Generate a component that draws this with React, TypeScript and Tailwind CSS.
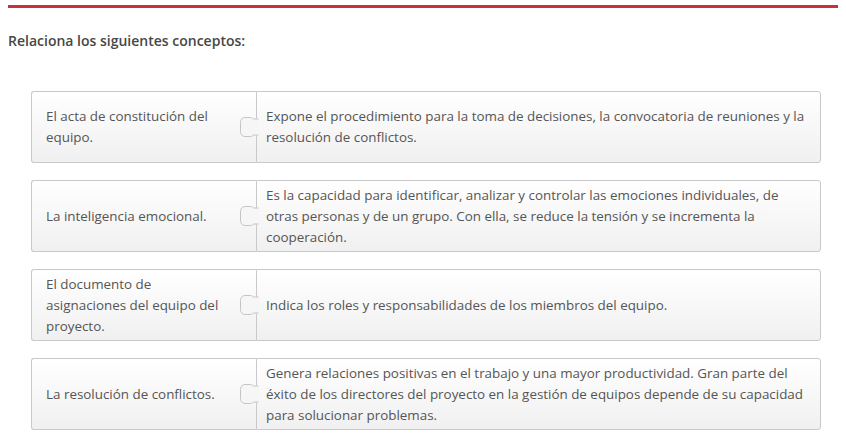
import React from "react";

const rows: { left: string; right: string }[] = [
  {
    left: "El acta de constitución del equipo.",
    right:
      "Expone el procedimiento para la toma de decisiones, la convocatoria de reuniones y la resolución de conflictos.",
  },
  {
    left: "La inteligencia emocional.",
    right:
      "Es la capacidad para identificar, analizar y controlar las emociones individuales, de otras personas y de un grupo. Con ella, se reduce la tensión y se incrementa la cooperación.",
  },
  {
    left: "El documento de asignaciones del equipo del proyecto.",
    right: "Indica los roles y responsabilidades de los miembros del equipo.",
  },
  {
    left: "La resolución de conflictos.",
    right:
      "Genera relaciones positivas en el trabajo y una mayor productividad. Gran parte del éxito de los directores del proyecto en la gestión de equipos depende de su capacidad para solucionar problemas.",
  },
];

function Knob() {
  return (
    <svg
      className="absolute left-[-17px] top-1/2 -translate-y-1/2"
      width="19"
      height="20"
      viewBox="0 0 19 20"
    >
      <rect x="15" y="1.5" width="4" height="17" fill="#f6f6f6" />
      <path
        d="M18.5 2 H14 C12.5 2 12.5 0.5 10.5 0.5 H5 C2.2 0.5 0.5 2.8 0.5 5.5 V14.5 C0.5 17.2 2.2 19.5 5 19.5 H10.5 C12.5 19.5 12.5 18 14 18 H18.5"
        fill="#f6f6f6"
        stroke="#c4c4c4"
        strokeWidth="1"
      />
    </svg>
  );
}

export default function App() {
  return (
    <div
      className="w-[846px] h-[433px] bg-white overflow-hidden"
      style={{ fontFamily: '"Open Sans", "Liberation Sans", sans-serif' }}
    >
      <div className="mx-[8px] mt-[5px] h-[3px] bg-[#c8303c]" />
      <h1 className="ml-[8px] mt-[23px] text-[14px] leading-[20px] font-semibold text-[#474747]">
        Relaciona los siguientes conceptos:
      </h1>
      <div className="ml-[31px] mt-[40px] w-[790px] flex flex-col gap-[17px]">
        {rows.map((r, i) => (
          <div key={i} className="flex h-[72px]">
            <div className="w-[225px] shrink-0 flex items-center border border-r-0 border-[#c9c9c9] rounded-l-[3px] bg-gradient-to-b from-white to-[#f0f0f0] pl-[14px]">
              <div className="w-[180px] text-[13.4px] leading-[21px] text-[#555555]">
                {r.left}
              </div>
            </div>
            <div className="relative flex-1 flex items-center border border-[#c9c9c9] rounded-r-[3px] bg-gradient-to-b from-white to-[#f0f0f0] pl-[9px] pr-[10px]">
              <Knob />
              <div className="text-[13.4px] leading-[21px] text-[#555555]">
                {r.right}
              </div>
            </div>
          </div>
        ))}
      </div>
    </div>
  );
}
